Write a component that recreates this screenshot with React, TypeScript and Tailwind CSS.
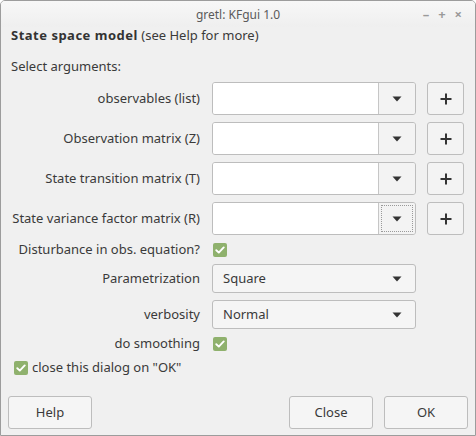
import type { ReactNode } from 'react';

const font = { fontFamily: '"Noto Sans", "Open Sans", sans-serif' };

const Arrow = () => (
  <svg width="10" height="6" viewBox="0 0 10 6">
    <path d="M0.5 0.5 H9.5 L5 5.5 Z" fill="#333" />
  </svg>
);

const Check = ({ className = '' }: { className?: string }) => (
  <div className={`w-[14px] h-[14px] rounded-[2px] bg-[#8fb16d] flex items-center justify-center ${className}`}>
    <svg width="10" height="8" viewBox="0 0 10 8">
      <path d="M1.3 4.2 L3.8 6.6 L8.7 1.4" stroke="#fff" strokeWidth="1.9" fill="none" strokeLinecap="round" strokeLinejoin="round" />
    </svg>
  </div>
);

const Label = ({ children }: { children: ReactNode }) => (
  <div className="w-[191px] shrink-0 text-right pr-[1px]">{children}</div>
);

const ArgRow = ({ label, focus = false }: { label: string; focus?: boolean }) => (
  <div className="flex items-center h-[33px] mt-[7px] first:mt-0">
    <Label>{label}</Label>
    <div className="ml-[11px] w-[204px] h-full flex border border-[#bdbdbd] rounded-[3px] overflow-hidden">
      <div className="flex-1 bg-white" />
      <div className="w-[37px] bg-[#f3f3f3] border-l border-[#c6c6c6] flex items-center justify-center p-[2px]">
        <div className={`w-full h-full flex items-center justify-center ${focus ? 'border border-dotted border-[#9a9a9a]' : ''}`}>
          <Arrow />
        </div>
      </div>
    </div>
    <div className="ml-[11px] w-[37px] h-full bg-[#f3f3f3] border border-[#bdbdbd] rounded-[3px] flex items-center justify-center">
      <svg width="12" height="12" viewBox="0 0 12 12">
        <path d="M6 0.5 V11.5 M0.5 6 H11.5" stroke="#333" strokeWidth="2" />
      </svg>
    </div>
  </div>
);

const Select = ({ label, value, top }: { label: string; value: string; top: string }) => (
  <div className={`flex items-center h-[29px] ${top}`}>
    <Label>{label}</Label>
    <div className="ml-[11px] w-[204px] h-full bg-[#f5f5f5] border border-[#bdbdbd] rounded-[3px] flex items-center justify-between pl-[10px] pr-[13px]">
      <span>{value}</span>
      <Arrow />
    </div>
  </div>
);

const Btn = ({ children }: { children: ReactNode }) => (
  <div className="w-[84px] h-[33px] bg-[#f5f5f5] border border-[#bdbdbd] rounded-[3px] flex items-center justify-center">
    {children}
  </div>
);

export default function App() {
  return (
    <div
      className="w-[476px] h-[436px] bg-[#f0f0f0] border border-[#9c9c9c] rounded-t-[5px] flex flex-col text-[13px] text-[#3a3a3a] overflow-hidden"
      style={font}
    >
      {/* title bar */}
      <div className="h-[26px] shrink-0 grid grid-cols-[1fr_auto_1fr] items-center bg-gradient-to-b from-[#f7f7f7] to-[#efefef]">
        <div />
        <div className="text-[12px] text-[#5a5a5a] pt-[1px]">gretl: KFgui 1.0</div>
        <div className="flex justify-end items-center gap-[9px] pr-[13px] text-[#9a9a9a] text-[13px] font-bold leading-none">
          <span>–</span>
          <span>+</span>
          <span>×</span>
        </div>
      </div>

      <div className="flex-1 flex flex-col px-[9px]">
        <div className="h-[18px] flex items-center pl-[1px]">
          <b className="font-bold text-[#333] tracking-[0.5px]">State space model</b>&nbsp;(see Help for more)
        </div>
        <div className="h-[18px] flex items-center pl-[1px] mt-[13px]">Select arguments:</div>

        <div className="mt-[6px]">
          <ArgRow label="observables (list)" />
          <ArgRow label="Observation matrix (Z)" />
          <ArgRow label="State transition matrix (T)" />
          <ArgRow label="State variance factor matrix (R)" focus />
        </div>

        <div className="flex items-center h-[14px] mt-[8px]">
          <Label>Disturbance in obs. equation?</Label>
          <Check className="ml-[12px]" />
        </div>

        <Select label="Parametrization" value="Square" top="mt-[7px]" />
        <Select label="verbosity" value="Normal" top="mt-[7px]" />

        <div className="flex items-center h-[14px] mt-[8px]">
          <Label>do smoothing</Label>
          <Check className="ml-[12px]" />
        </div>

        <div className="flex items-center h-[14px] mt-[10px] pl-[4px]">
          <Check />
          <span className="ml-[4px]">close this dialog on "OK"</span>
        </div>

        <div className="mt-auto mb-[6px] flex items-center -mx-[3px] px-[1px]">
          <Btn>Help</Btn>
          <div className="flex-1" />
          <Btn>Close</Btn>
          <div className="ml-[11px]">
            <Btn>OK</Btn>
          </div>
        </div>
      </div>
    </div>
  );
}
